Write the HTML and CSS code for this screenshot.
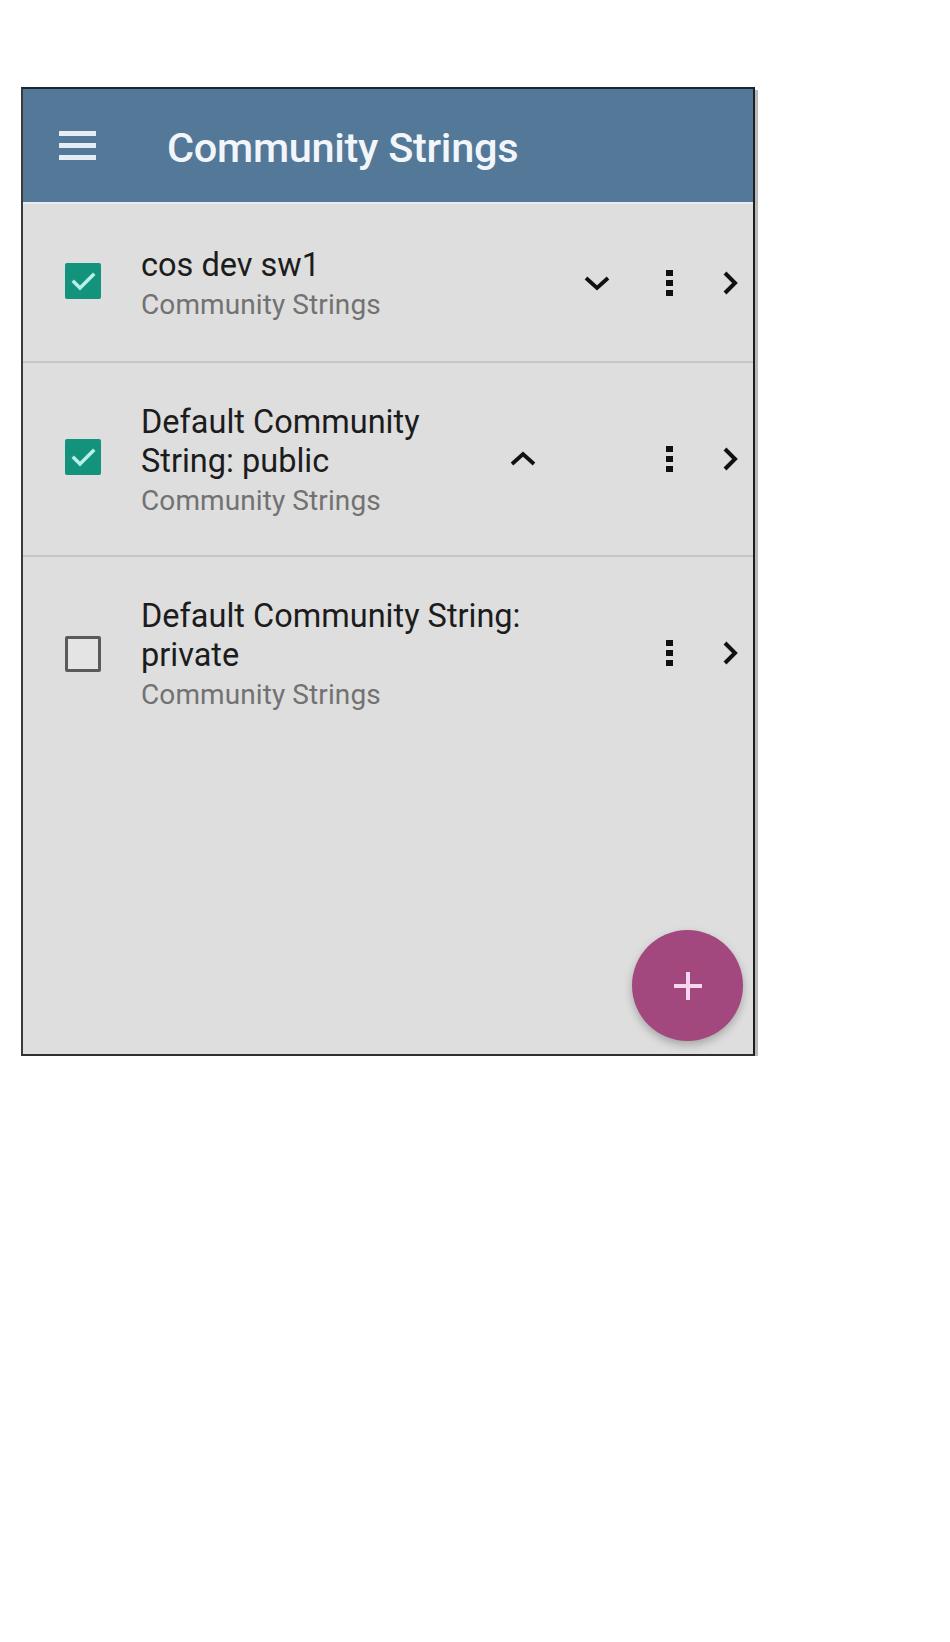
FILE: index.html
```html
<!DOCTYPE html>
<html>
<head>
<meta charset="utf-8">
<link rel="stylesheet" href="styles.css">
</head>
<body>
<div class="phone">
  <header class="appbar">
    <div class="hamburger"><span></span><span></span><span></span></div>
    <h1 class="appbar-title">Community Strings</h1>
  </header>
  <ul class="list">
    <li class="row row-short">
      <span class="checkbox checked"><svg viewBox="0 0 36 36" width="36" height="36"><path d="M9 19 L15 25 L28 12" fill="none" stroke="#b6f1ea" stroke-width="3.5" stroke-linecap="square"/></svg></span>
      <div class="text">
        <div class="title">cos dev sw1</div>
        <div class="subtitle">Community Strings</div>
      </div>
      <span class="chev chev-down"><svg viewBox="0 0 28 16" width="28" height="16"><path d="M3 3 L14 13 L25 3" fill="none" stroke="#111" stroke-width="3.8"/></svg></span>
      <span class="kebab"><i></i><i></i><i></i></span>
      <span class="arrow"><svg viewBox="0 0 18 26" width="18" height="26"><path d="M4 3 L14 13 L4 23" fill="none" stroke="#111" stroke-width="4"/></svg></span>
    </li>
    <li class="row row-tall">
      <span class="checkbox checked"><svg viewBox="0 0 36 36" width="36" height="36"><path d="M9 19 L15 25 L28 12" fill="none" stroke="#b6f1ea" stroke-width="3.5" stroke-linecap="square"/></svg></span>
      <div class="text text-narrow">
        <div class="title">Default Community String: public</div>
        <div class="subtitle">Community Strings</div>
      </div>
      <span class="chev chev-up"><svg viewBox="0 0 28 16" width="28" height="16"><path d="M3 13 L14 3 L25 13" fill="none" stroke="#111" stroke-width="3.8"/></svg></span>
      <span class="spacer"></span>
      <span class="kebab"><i></i><i></i><i></i></span>
      <span class="arrow"><svg viewBox="0 0 18 26" width="18" height="26"><path d="M4 3 L14 13 L4 23" fill="none" stroke="#111" stroke-width="4"/></svg></span>
    </li>
    <li class="row row-tall row-last">
      <span class="checkbox"></span>
      <div class="text text-wide">
        <div class="title">Default Community String: private</div>
        <div class="subtitle">Community Strings</div>
      </div>
      <span class="spacer"></span>
      <span class="kebab"><i></i><i></i><i></i></span>
      <span class="arrow"><svg viewBox="0 0 18 26" width="18" height="26"><path d="M4 3 L14 13 L4 23" fill="none" stroke="#111" stroke-width="4"/></svg></span>
    </li>
  </ul>
  <button class="fab" aria-label="Add"><span class="plus"></span></button>
</div>
</body>
</html>
```

FILE: styles.css
```css
html, body {
  margin: 0;
  padding: 0;
  background: #ffffff;
}

body {
  font-family: Roboto, "Liberation Sans", sans-serif;
  padding-top: 87px;
  padding-left: 21px;
}

.phone {
  position: relative;
  box-sizing: border-box;
  width: 734px;
  height: 969px;
  background: #dedede;
  border-left: 2px solid #3a3a3a;
  border-right: 2px solid #1e1e1e;
  border-bottom: 2px solid #2e2e2e;
  border-top: 2px solid #1b2633;
  box-shadow: 3px 3px 0 #b9b9b9;
  display: flex;
  flex-direction: column;
}

.appbar {
  height: 113px;
  background: #537898;
  display: flex;
  align-items: center;
  border-bottom: 2px solid #e6ebef;
  box-sizing: content-box;
}

.hamburger {
  width: 37px;
  margin-left: 36px;
  display: flex;
  flex-direction: column;
  gap: 7px;
}

.hamburger span {
  display: block;
  height: 5px;
  background: #e4ecf4;
}

.appbar-title {
  margin: 0 0 0 71px;
  padding-top: 4px;
  font-size: 41.5px;
  font-weight: 500;
  color: #f2f6fa;
  letter-spacing: -0.3px;
}

.list {
  list-style: none;
  margin: 0;
  padding: 0;
}

.row {
  display: flex;
  align-items: center;
  padding-left: 42px;
  padding-right: 14px;
  border-bottom: 2px solid #c6c6c6;
}

.row-short { height: 157px; }
.row-tall { height: 192px; }
.row-last { border-bottom: none; }

.checkbox {
  flex: 0 0 auto;
  box-sizing: border-box;
  width: 36px;
  height: 36px;
  border-radius: 2px;
  border: 3px solid #5a5a5a;
  background: #e4e4e4;
  margin-right: 40px;
  margin-top: 2px;
}

.checkbox.checked {
  border: none;
  background: #13927c;
  margin-top: -4px;
}

.checkbox svg { display: block; }

.text {
  flex: 1 1 auto;
  padding-top: 4px;
}

.text-narrow {
  flex: 0 0 auto;
  width: 300px;
}

.text-wide {
  flex: 0 0 auto;
  width: 420px;
}

.title {
  font-size: 32.5px;
  line-height: 39px;
  color: #1c1c1c;
}

.subtitle {
  font-size: 28px;
  line-height: 39px;
  color: #727272;
  letter-spacing: 0.1px;
}

.spacer { flex: 1 1 auto; }

.chev svg, .arrow svg { display: block; }

.chev-down {
  margin-right: 55px;
}

.chev-up {
  margin-left: 68px;
}

.kebab {
  width: 7px;
  display: flex;
  flex-direction: column;
  gap: 4px;
  margin-right: 48px;
}

.kebab i {
  display: block;
  width: 7px;
  height: 6px;
  background: #111;
}

.arrow {
  width: 18px;
}

.fab {
  position: absolute;
  right: 10px;
  bottom: 13px;
  width: 111px;
  height: 111px;
  border-radius: 50%;
  border: none;
  background: #a3477f;
  box-shadow: 0 4px 8px rgba(0, 0, 0, 0.25);
  padding: 0;
}

.plus {
  position: absolute;
  left: 50%;
  top: 50%;
  width: 28px;
  height: 28px;
  transform: translate(-50%, -50%);
}

.plus::before, .plus::after {
  content: "";
  position: absolute;
  background: #f6d7ec;
}

.plus::before {
  left: 0;
  top: 12px;
  width: 28px;
  height: 4px;
}

.plus::after {
  left: 12px;
  top: 0;
  width: 4px;
  height: 28px;
}
```
